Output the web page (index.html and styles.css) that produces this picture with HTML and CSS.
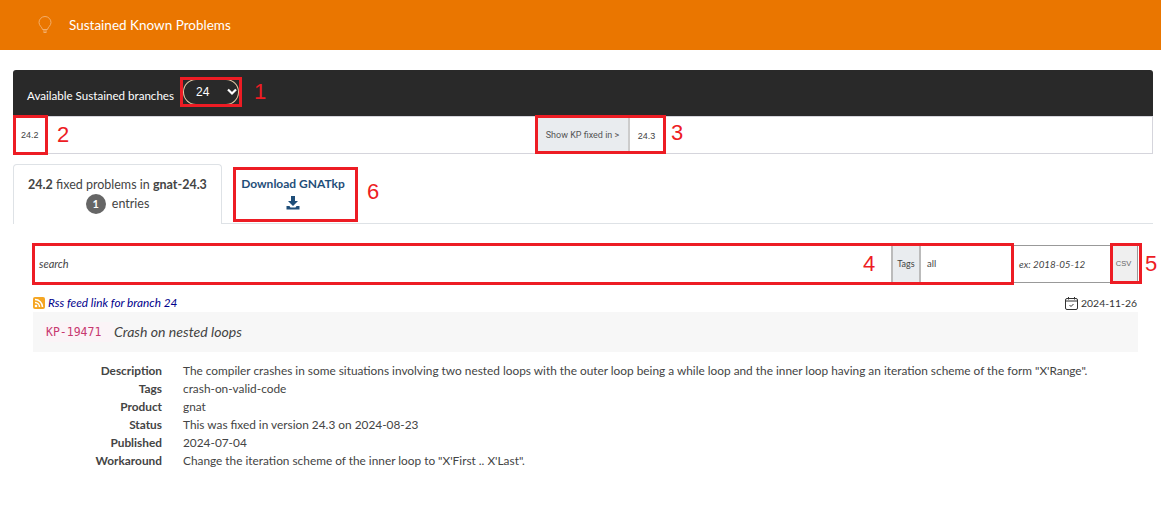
FILE: index.html
```html
<!DOCTYPE html>
<html lang="en">
<head>
<meta charset="utf-8">
<title>Sustained Known Problems</title>
<link rel="stylesheet" href="styles.css">
</head>
<body>
<header class="topbar">
  <svg class="bulb" width="16" height="18" viewBox="0 0 16 18" fill="none" stroke="#f3ae6a" stroke-width="1"><path d="M5.5 13.5C5.2 11 2 9.8 2 6.5a6 6 0 0 1 12 0c0 3.300-3.200 4.500-3.500 7z"/><path d="M6 15h4M6.500 16.500h3"/></svg>
  <span class="brand">Sustained Known Problems</span>
</header>
<main class="page">
  <section class="branches">
    <label class="branches-label">Available Sustained branches</label>
    <div class="select-pill"><span>24</span><svg width="10" height="8" viewBox="0 0 10 8" fill="none" stroke="#fff" stroke-width="2.200"><path d="M1 1.500l4 4 4-4"/></svg></div>
  </section>
  <section class="versions">
    <div class="ver-left">24.2</div>
    <div class="ver-mid"><span class="addon">Show KP fixed in &gt;</span><span class="ver-val">24.3</span></div>
  </section>
  <nav class="tabs">
    <div class="tab active">
      <div><b>24.2</b> fixed problems in <b>gnat-24.3</b></div>
      <div><span class="count">1</span> entries</div>
    </div>
    <div class="tab link">
      <div>Download GNATkp</div>
      <svg width="14" height="14" viewBox="0 0 14 14" fill="#1f4e79"><path d="M5 0h4v5h3L7 10 2 5h3z"/><path d="M0.500 10h3l1 1.500h5l1-1.500h3v3.500H.5z"/></svg>
    </div>
  </nav>
  <section class="filters">
    <div class="search">search</div>
    <div class="tags-label">Tags</div>
    <div class="tags-val">all</div>
    <div class="date">ex: 2018-05-12</div>
    <div class="csv">CSV</div>
  </section>
  <section class="meta">
    <div class="rss-link">
      <svg width="12" height="12" viewBox="0 0 12 12"><rect width="12" height="12" rx="2" fill="#f5a623"/><circle cx="3" cy="9" r="1.300" fill="#fff"/><path d="M2 5.500a4.500 4.500 0 0 1 4.500 4.500M2 2.500A7.500 7.500 0 0 1 9.500 10" stroke="#fff" stroke-width="1.500" fill="none"/></svg>
      <span>Rss feed link for branch 24</span>
    </div>
    <div class="updated">
      <svg width="13" height="13" viewBox="0 0 13 13" fill="none" stroke="#333" stroke-width="1"><rect x=".5" y="1.500" width="12" height="11" rx="1.500"/><path d="M.5 4h12M3.500 0v2.500M9.500 0v2.500M4.500 8l1.500 1.500 2.500-2.500"/></svg>
      <span>2024-11-26</span>
    </div>
  </section>
  <section class="kp-head"><code class="kp-id">KP-19471</code><em>Crash on nested loops</em></section>
  <dl class="details">
    <dt>Description</dt><dd>The compiler crashes in some situations involving two nested loops with the outer loop being a while loop and the inner loop having an iteration scheme of the form "X'Range".</dd>
    <dt>Tags</dt><dd>crash-on-valid-code</dd>
    <dt>Product</dt><dd>gnat</dd>
    <dt>Status</dt><dd>This was fixed in version 24.3 on 2024-08-23</dd>
    <dt>Published</dt><dd>2024-07-04</dd>
    <dt>Workaround</dt><dd>Change the iteration scheme of the inner loop to "X'First .. X'Last".</dd>
  </dl>
</main>
<div class="mark m1"></div><span class="num n1">1</span>
<div class="mark m2"></div><span class="num n2">2</span>
<div class="mark m3"></div><span class="num n3">3</span>
<div class="mark m4"></div><span class="num n4">4</span>
<div class="mark m5"></div><span class="num n5">5</span>
<div class="mark m6"></div><span class="num n6">6</span>
</body>
</html>
```
FILE: styles.css
```css
* { box-sizing: border-box; }
html, body { margin: 0; padding: 0; }
body { position: relative; height: 515px; overflow: hidden; background: #fff; color: #333; font: 13px/18px Lato, sans-serif; }
.topbar { height: 50px; background: #ea7600; display: flex; align-items: center; padding-left: 37px; color: #fff; }
.bulb { margin-right: 16px; }
.brand { font-size: 13.500px; }
.page { padding: 20px 8px 0 13px; }
.branches { height: 46px; background: #292929; color: #fff; border-radius: 3px 3px 0 0; display: flex; align-items: center; padding: 6px 0 0 14px; font-size: 11.600px; }
.branches-label { width: 156px; white-space: nowrap; }
.select-pill { width: 56px; height: 26px; margin-top: -8px; border-radius: 13px; display: flex; align-items: center; justify-content: space-between; padding: 0 2px 0 13px; font: 12px "Liberation Sans", sans-serif; box-shadow: inset 0 0 0 1px #e8c9a5; background: #292929; }
.versions { height: 38px; border: 1px solid #d5d5dc; display: flex; position: relative; justify-content: center; font: 9px "Liberation Sans", sans-serif; color: #444; }
.ver-left { position: absolute; left: 7px; top: 13px; }
.ver-mid { display: flex; height: 34px; margin: 1px 0 0 35px; }
.addon { width: 92px; background: #e9ecef; border-right: 2px solid #ccc; display: flex; align-items: center; justify-content: center; font-family: Roboto, sans-serif; color: #555; }
.ver-val { width: 34px; display: flex; align-items: center; justify-content: center; padding-top: 1px; }
.tabs { display: flex; height: 60px; margin-top: 10px; border-bottom: 1px solid #dee2e6; gap: 12px; font-size: 12.500px; text-align: center; }
.tab { line-height: 19px; white-space: nowrap; }
.tab.active { width: 209px; height: 60px; background: #fff; border: 1px solid #dee2e6; border-bottom: none; border-radius: 4px 4px 0 0; padding-top: 10px; color: #444; }
.tab.link { width: 118px; color: #1f4e79; font-weight: 700; font-size: 12px; padding-top: 10px; }
.tab.link svg { display: block; margin: 3px auto 0; }
.count { display: inline-block; width: 20px; height: 20px; line-height: 20px; border-radius: 50%; background: #666; color: #fff; font-weight: 700; font-size: 11px; margin-right: 3px; }
.filters { display: flex; height: 38px; margin: 21px 15px 0 20px; border: 1px solid #999; font-style: italic; font-size: 11px; align-items: stretch; color: #444; }
.search { width: 857px; padding: 9px 5px; }
.tags-label { width: 30px; background: #e9ecef; border: solid #bbb; border-width: 0 2px; font-style: normal; display: flex; align-items: center; justify-content: center; font-size: 9px; }
.tags-val { width: 92px; padding: 9px 6px; font-style: normal; font-size: 9.500px; }
.date { width: 97px; padding: 9px 5px; font-size: 9.800px; border-left: 1px solid #999; }
.csv { width: 27px; background: #efefef; font-style: normal; font-family: "Liberation Sans", sans-serif; font-size: 7.500px; color: #666; display: flex; align-items: center; justify-content: center; }
.meta { display: flex; justify-content: space-between; height: 16px; margin: 12px 16px 0 20px; align-items: center; font-size: 10.400px; }
.rss-link { display: flex; align-items: center; gap: 3px; font-style: italic; color: #00008b; font-size: 11.800px; }
.updated { display: flex; align-items: center; gap: 3px; }
.kp-head { height: 40px; margin: 1px 15px 0 20px; background: #f7f7f7; display: flex; align-items: center; padding-left: 10px; font-size: 14.100px; color: #444; }
.kp-id { font: 11.500px "DejaVu Sans Mono", monospace; color: #c7386f; background: #fbf4f7; padding: 3px; border-radius: 4px; width: 71px; }
.details { display: grid; grid-template-columns: 149px 1fr; column-gap: 21px; margin: 10px 0 0; font-size: 11.850px; line-height: 18px; }
dt { text-align: right; font-weight: 700; color: #444; }
dd { margin: 0; color: #444; white-space: nowrap; }
.mark { position: absolute; border: 3px solid #ed1c24; pointer-events: none; }
.m1 { left: 180px; top: 77px; width: 62px; height: 30px; }
.m2 { left: 13px; top: 115px; width: 35px; height: 40px; }
.m3 { left: 535px; top: 115px; width: 131px; height: 39px; }
.m4 { left: 32px; top: 243px; width: 982px; height: 42px; }
.m5 { left: 1110px; top: 243px; width: 32px; height: 41px; }
.m6 { left: 233px; top: 167px; width: 125px; height: 55px; }
.num { position: absolute; color: #ed1c24; font: 22px/24px "Liberation Sans", sans-serif; }
.n1 { left: 254px; top: 80px; }
.n2 { left: 57px; top: 123px; }
.n3 { left: 671px; top: 121px; }
.n4 { left: 863px; top: 252px; }
.n5 { left: 1145px; top: 252px; }
.n6 { left: 367px; top: 180px; }
```
